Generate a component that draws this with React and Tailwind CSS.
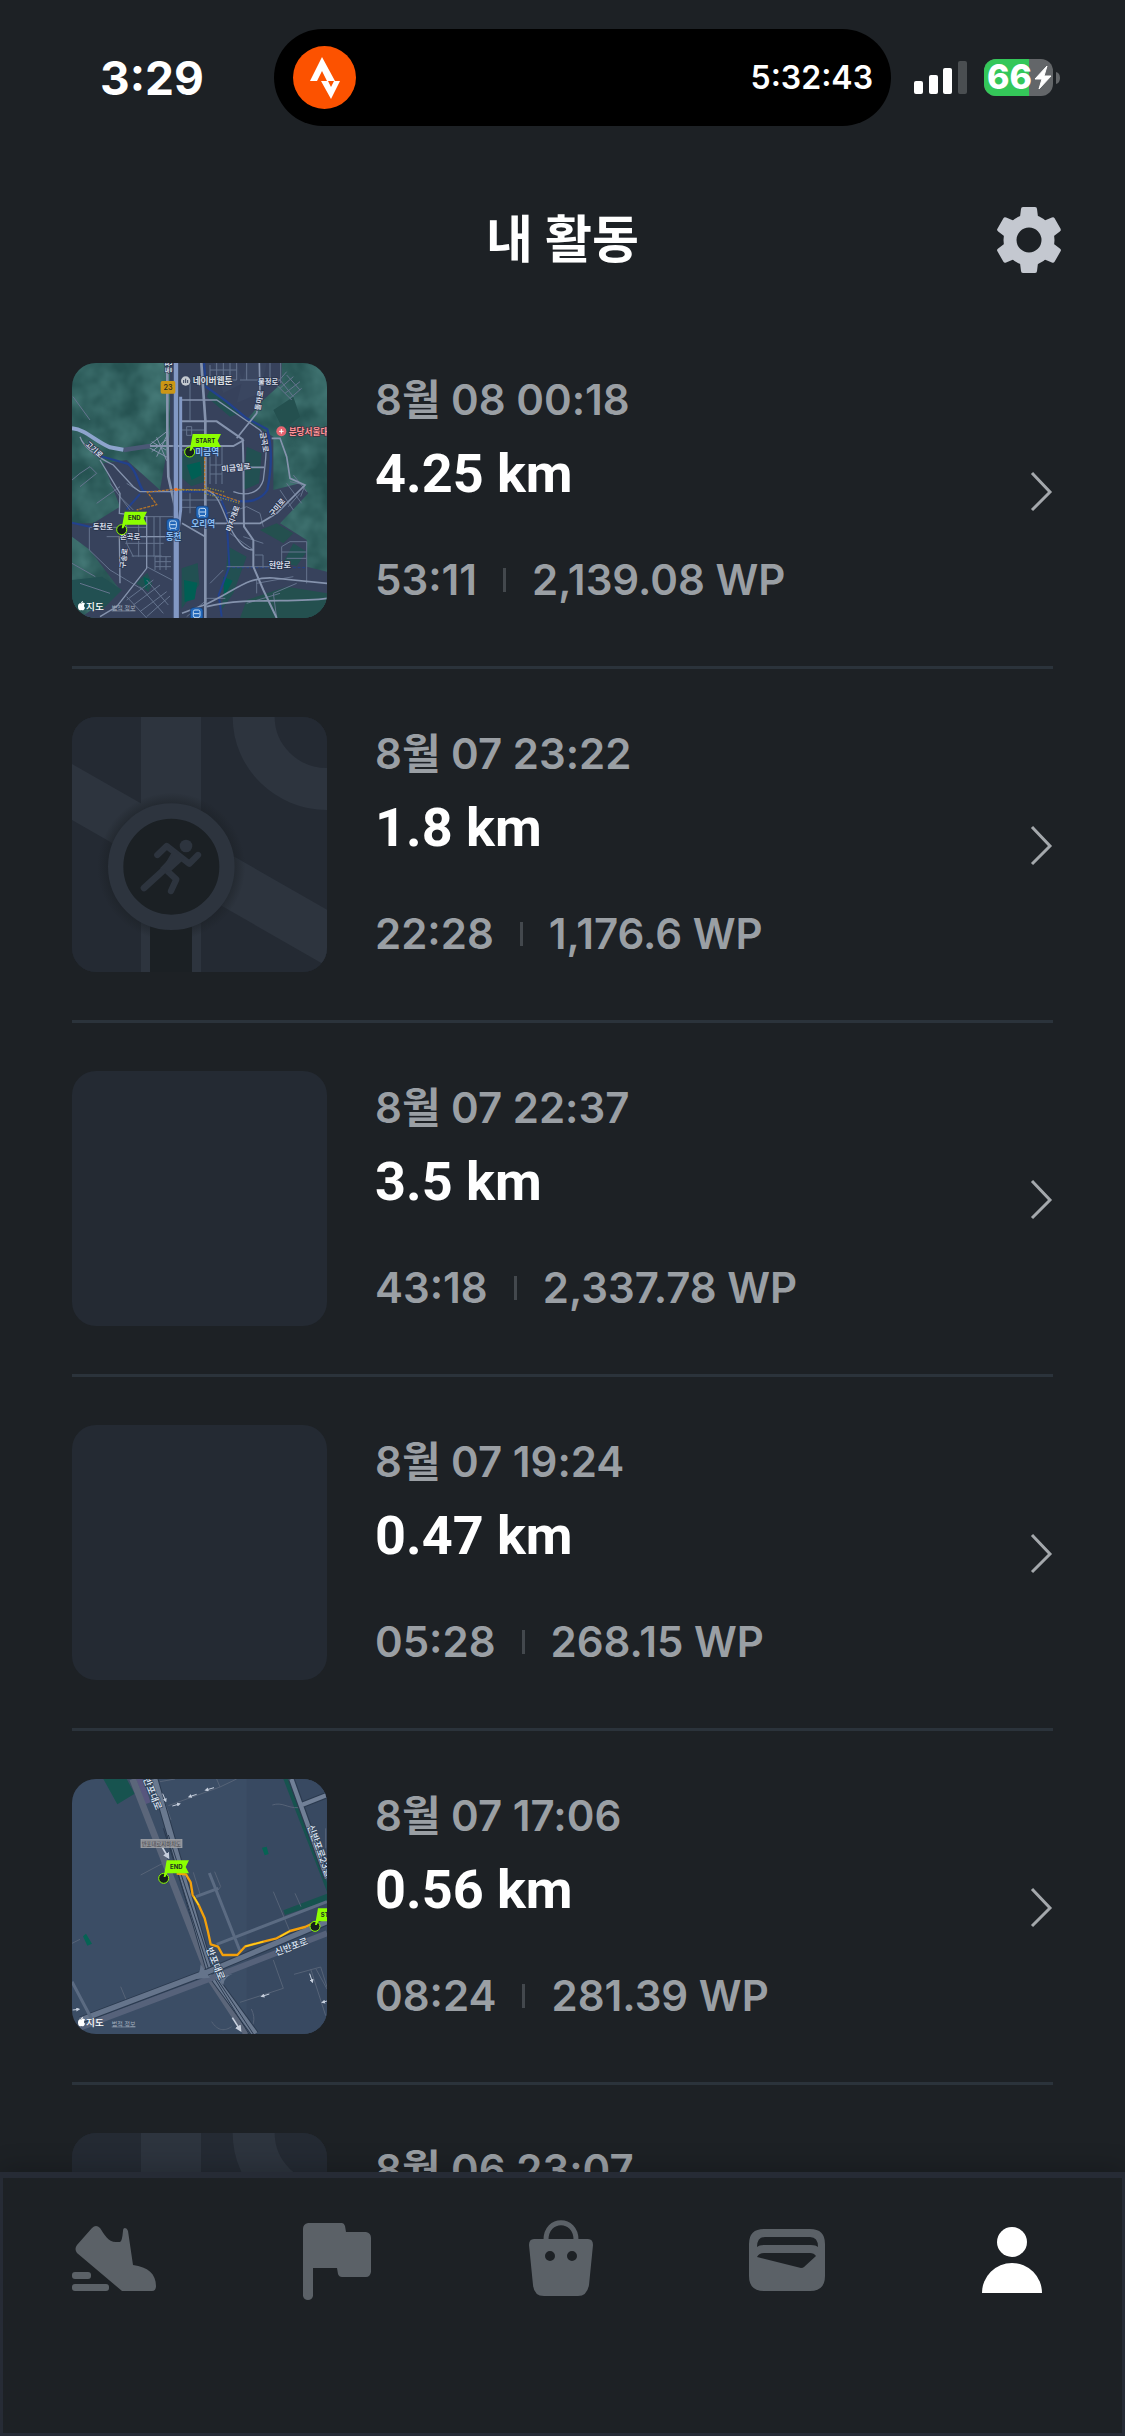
import { useState } from 'react';

const activities = [
  { id: 1, date: '8월 08 00:18', distance: '4.25 km', time: '53:11', points: '2,139.08 WP', thumb: 'city' },
  { id: 2, date: '8월 07 23:22', distance: '1.8 km', time: '22:28', points: '1,176.6 WP', thumb: 'default' },
  { id: 3, date: '8월 07 22:37', distance: '3.5 km', time: '43:18', points: '2,337.78 WP', thumb: 'empty' },
  { id: 4, date: '8월 07 19:24', distance: '0.47 km', time: '05:28', points: '268.15 WP', thumb: 'empty' },
  { id: 5, date: '8월 07 17:06', distance: '0.56 km', time: '08:24', points: '281.39 WP', thumb: 'street' },
  { id: 6, date: '8월 06 23:07', distance: '1.2 km', time: '15:42', points: '704.12 WP', thumb: 'default' },
];

function MapFlag({ x, y, label, width = 74 }) {
  return (
    <g transform={`translate(${x} ${y})`}>
      <circle r="15" fill="#15201c" stroke="#8cff00" strokeWidth="3" />
      <path d={`M0-4 9-54H${width + 20}l-10 20 10 19H11L5-4Z`} fill="#8cff00" />
      <text x={width / 2 + 10} y="-28" textAnchor="middle" fontSize="18" fontWeight="700" fill="#1c3022">{label}</text>
    </g>
  );
}

function AppleMapsMark({ y }) {
  return (
    <g>
      <path d={`M64 ${y - 18}c5-5 9-2 11 0-5 4-3 10 0 12-3 8-6 9-11 7-6 2-9-1-10-9 0-9 4-13 10-10ZM63 ${y - 19}c0-4 3-7 6-7 0 4-3 7-6 7Z`} fill="#fff" />
      <text x="78" y={y} fontSize="29" fontWeight="500" fill="#fff">지도</text>
      <text x="155" y={y} fontSize="18" fill="#a2adbd" textDecoration="underline">법적 정보</text>
    </g>
  );
}

function StationPin({ x, y }) {
  return (
    <g transform={`translate(${x} ${y})`}>
      <rect x="-19" y="-19" width="38" height="38" rx="9" fill="#2166b8" stroke="#173a6d" strokeWidth="2" />
      <rect x="-10" y="-12" width="20" height="22" rx="5" fill="none" stroke="#c5ddf5" strokeWidth="3" />
      <path d="M-8-1H8M-9 14l3-4M9 14l-3-4" stroke="#c5ddf5" strokeWidth="3" />
    </g>
  );
}

function CityMap() {
  return (
    <svg viewBox="36 39 765 765" className="size-full" aria-hidden="true">
      <defs>
        <filter id="terrain" x="0" y="0" width="100%" height="100%">
          <feTurbulence type="fractalNoise" baseFrequency="0.012" numOctaves="3" seed="4" />
          <feColorMatrix values="0 0 0 0 0.08  0 0 0 0 0.24  0 0 0 0 0.23  1.2 0 0 0 -0.3" />
        </filter>
      </defs>
      <rect x="36" y="39" width="765" height="765" fill="#265352" />
      <rect x="36" y="39" width="765" height="765" filter="url(#terrain)" />
      <path d="M365 39H665V100L610 150 560 210 640 260V420L720 400 745 430 660 520 740 570V650L801 665V740L640 804H60L180 720 90 600 36 560V520L100 520 180 470 130 340 200 330 300 420 330 250V39Z" fill="#37425c" />
      <path d="M560 39h60l-20 90-70 30ZM460 39h70l20 60-60 30Z" fill="#3a4660" />
      <path d="M366 320l30-30 35 15 3 90-40 14-28-25ZM365 655l48-16 5 65-53 72ZM228 700l34-32 15 34-12 24ZM505 590l55 30-40 110-35 50ZM700 580l40 25-30 43-40-10ZM510 200l-70-60 10-20 90 70ZM560 290l45 20-8 90-46 20ZM36 690l90-10 60 40-60 60H36Z" fill="#225052" />
      <path d="M560 750l120-40 121 20v74H540ZM600 540l50-20 50 30-30 30ZM640 180l60-40 20 60-50 40Z" fill="#24504f" />
      <path d="M372 690l40 8-8 50-30 8ZM380 345l40-10 5 40-30 15ZM490 680l28 12-26 50ZM250 680l18 8-10 30Z" fill="#005f54" />
      <g fill="none" stroke="#22418d">
        <path d="M432 39 438 110 500 155 560 205 622 238C636 290 634 360 622 420 598 458 555 458 510 450L430 424H250C232 396 230 360 205 342L120 318" strokeWidth="7" />
        <path d="M484 450 500 490 503 560 508 650 476 735 485 800M36 518l60 14M200 478l40-46" strokeWidth="6" />
        <path d="M503 653H740" strokeWidth="3" strokeDasharray="8 6" />
      </g>
      <g fill="none" stroke="#65748e" strokeWidth="3">
        <path d="M39 140 90 210M36 390 60 370 90 350 110 370 60 410M88 532V600L150 660 200 690 250 720M90 532H260M140 560h170M196 580h115M215 618h90M200 500v80l20 40M300 500v120M260 500H340M236 520v100M282 500v120" />
        <path d="M450 290v112M468 290v112M486 290v112M450 345h36M450 372h36M366 240h70M366 300h70M380 230h15v26h-15ZM390 100v110M366 450h120M366 472h60M390 430v60" />
        <path d="M450 45V90H530V39M470 39V90M490 39V90M510 39V90M450 60h80M540 90h60M560 39V90M630 39V90M662 39V100M600 90h62" />
        <path d="M285 620h48M285 635h48M285 650h48M285 620v40M300 620v40M318 620v40M260 650l76 40M200 750l80-60M220 765l80-60M240 785l80-60M260 800l70-62M200 740l60 64M240 710l70 80M260 690l65 75" />
        <path d="M500 650H665V590L690 575H740V700M665 606h75M680 625h60M585 615h24v38M590 690v40M590 700 700 680M650 804 640 730 710 700M560 760l100-30M450 700l40-40M436 745h60M380 800l60-50" />
        <path d="M650 100 680 65M660 115 700 80M675 130 720 95M690 145 725 115M660 90 700 140M680 75l40 45M640 95l55 55" />
        <path d="M690 395 735 405 722 440M680 400l45 60M700 375l40 50M685 470l35-40M700 480l-40-60M500 490 560 470 600 490 610 530M510 550l70 50M550 560l60 20" />
        <path d="M110 460l70-50M200 400l40 25M180 440l40 40M150 400l60 80M60 700l90 30M36 640l70 40" />
      </g>
      <g fill="none" stroke="#8593ad">
        <path d="M270 288H520L552 270" strokeWidth="6" />
        <path d="M322 60V250L325 380 345 470V804" strokeWidth="8" />
        <path d="M424 39 436 210V804" strokeWidth="8" />
        <path d="M366 214H470L548 268C552 350 550 450 552 530L580 570V650L610 720 650 804" strokeWidth="6" />
        <path d="M366 150H470L600 240C630 270 615 340 610 390 598 430 560 440 520 425" strokeWidth="4" />
        <path d="M598 39 600 130 590 190 530 265M635 265H660L680 320 690 385 735 405 650 490 600 520H440M552 352H612" strokeWidth="5" />
        <path d="M436 420C480 425 490 500 520 550 545 590 560 600 580 600" strokeWidth="4" />
        <path d="M60 260C70 290 110 320 160 345L220 410 240 425H345M120 330 180 430 178 490 260 500V655L170 770 120 800M178 560H350M178 560 180 700" strokeWidth="4" />
        <path d="M366 790 440 762C530 720 560 680 640 684L801 700M440 770C560 740 700 760 801 745M366 520 436 560" strokeWidth="5" />
        <path d="M262 290 320 245M262 290 322 322M275 275 318 300M275 305 318 270M290 262l30 70M290 320l30-62" strokeWidth="3" />
      </g>
      <path d="M190 300 270 288" stroke="#4b5876" strokeWidth="14" />
      <path d="M36 235C80 240 100 270 150 292L190 299" fill="none" stroke="#8ea4cd" strokeWidth="12" />
      <path d="M348 39V804" stroke="#8298c4" strokeWidth="13" />
      <path d="M362 140V480L352 560V804" fill="none" stroke="#8298c4" strokeWidth="9" />
      <path d="M340 39V804" stroke="#4a5b82" strokeWidth="2" />
      <path d="M434 320V418L540 455M434 420 345 418 262 426 290 464 230 480" fill="none" stroke="#b27328" strokeWidth="4" strokeDasharray="9 3" />
      <path d="M434 430 540 460M434 412l60 14M345 420H434" stroke="#918b36" strokeWidth="4" strokeDasharray="4 4" />
      <circle cx="348" cy="418" r="5" fill="#f2752d" />
      <rect x="302" y="93" width="44" height="38" rx="5" fill="#cb9615" />
      <text x="324" y="120" fontSize="22" fontWeight="500" textAnchor="middle" fill="#2d2a20">23</text>
      <g fill="#d5dbe8" stroke="#263148" strokeWidth="4" paintOrder="stroke" fontSize="22" fontWeight="700">
        <text x="398" y="103" fontSize="26" fill="#dfe1e6">네이버웹툰</text>
        <text x="594" y="102">불정로</text>
        <text x="485" y="366" transform="rotate(-6 485 366)" fontSize="24">미금일로</text>
        <text x="75" y="284" transform="rotate(42 75 284)">고기로</text>
        <text x="98" y="538">동천로</text>
        <text x="180" y="566">손곡로</text>
        <text x="195" y="656" transform="rotate(-82 195 656)">구송로</text>
        <text x="626" y="654" fontSize="24">현암로</text>
        <text x="638" y="500" transform="rotate(-50 638 500)">구미로</text>
        <text x="512" y="546" transform="rotate(-70 512 546)">마지개로</text>
        <text x="600" y="248" transform="rotate(80 600 248)">금곡로</text>
        <text x="600" y="182" transform="rotate(-80 600 182)">돌마로</text>
        <text x="333" y="70" transform="rotate(-90 333 70)">동천</text>
      </g>
      <circle cx="377" cy="93" r="14" fill="#c4c9d0" />
      <path d="M371 99V90M377 99V86M383 99V90" stroke="#37425c" strokeWidth="3" />
      <circle cx="664" cy="244" r="15" fill="#e56470" />
      <path d="M657 244h14M664 237v14" stroke="#fff" strokeWidth="3" />
      <text x="686" y="254" fontSize="26" fontWeight="700" fill="#ff9496" stroke="#462f3d" strokeWidth="4" paintOrder="stroke">분당서울대</text>
      <StationPin x={427} y={487} />
      <StationPin x={339} y={525} />
      <StationPin x={410} y={792} />
      <g fill="#8dbdf0" stroke="#1d3c68" strokeWidth="4" paintOrder="stroke" fontSize="26" fontWeight="700">
        <text x="406" y="315">미금역</text>
        <text x="394" y="532">오리역</text>
        <text x="317" y="570">동천</text>
      </g>
      <MapFlag x={389} y={306} label="START" />
      <MapFlag x={185} y={539} label="END" width={56} />
      <AppleMapsMark y={779} />
    </svg>
  );
}

function StreetMap() {
  return (
    <svg viewBox="36 42 765 765" className="size-full" aria-hidden="true">
      <defs>
        <marker id="oneway" viewBox="0 0 10 10" refX="6" refY="5" markerWidth="4" markerHeight="4" orient="auto">
          <path d="M0 0 10 5 0 10Z" fill="#c6cfdd" />
        </marker>
      </defs>
      <rect x="36" y="42" width="765" height="765" fill="#3b4d65" />
      <path d="M560 42H801V807H560Z" fill="#384961" />
      <path d="M130 42h70l24 44-52 32ZM670 436l131-50v22L675 450ZM670 42h14l117 310v28Z" fill="#17534f" />
      <path d="M78 506l18 30-14 6-13-28ZM606 248l14-3 6 22-12 4Z" fill="#066354" />
      <path d="M228 42h20l24 70-16 6Z" fill="#57567e" />
      <g fill="none" stroke="#566377" strokeWidth="3">
        <path d="M290 42 333 165M300 50 345 42M325 122 480 66 530 42M470 42l10 24M242 330 310 294M400 322l20 65M464 320l18 45-8 10M640 380l50 120M705 385l18 40M182 665l20 48M36 535l24-12M637 120c30-10 45 10 78 8M540 712 670 670 640 585M702 628l80-22 19 60M752 612l45 140M768 612l33 60M455 770c20 30 40 28 60 15M574 732c15 30 8 60-20 65M797 250v-60" />
      </g>
      <g fill="none">
        <path d="M218 42 450 640 560 807" stroke="#5b667a" strokeWidth="20" />
        <path d="M283 42 452 625 585 807" stroke="#2a394e" strokeWidth="24" />
        <path d="M283 42 452 625 585 807" stroke="#6a798f" strokeWidth="18" />
        <path d="M310 190 445 610 567 807M325 210 460 625 580 807" stroke="#2a394e" strokeWidth="3" />
        <path d="M60 788 440 645 801 505" stroke="#56627a" strokeWidth="18" />
        <path d="M60 766 440 622 801 470" stroke="#2b3a4f" strokeWidth="22" />
        <path d="M60 766 440 622 801 470" stroke="#65748b" strokeWidth="16" />
        <path d="M36 650 95 762M470 538 801 410M448 324 540 558M408 395 475 370" stroke="#5b6b82" strokeWidth="9" />
        <path d="M694 42 801 340M725 120 801 90" stroke="#2b3a4f" strokeWidth="20" />
        <path d="M694 42 801 340M725 120 801 90" stroke="#718097" strokeWidth="13" />
      </g>
      <path d="M400 643q20-10 22-45l28 40ZM490 660q2-25 28-33l-50 10Z" fill="#65748b" />
      <g stroke="#c6cfdd" strokeWidth="3" fill="none">
        <path d="M308 86 317 108" markerEnd="url(#oneway)" />
        <path d="M410 88 388 95" markerEnd="url(#oneway)" />
        <path d="M462 68 438 75" markerEnd="url(#oneway)" />
        <path d="M337 123 358 117" markerEnd="url(#oneway)" />
        <path d="M628 687 606 694" markerEnd="url(#oneway)" />
        <path d="M749 626 757 650" markerEnd="url(#oneway)" />
        <path d="M38 735 56 733" markerEnd="url(#oneway)" />
        <path d="M801 708 788 712" markerEnd="url(#oneway)" />
        <path d="M304 242 324 276" strokeWidth="5" markerEnd="url(#oneway)" />
        <path d="M517 758 540 794" strokeWidth="5" markerEnd="url(#oneway)" />
      </g>
      <g fill="#dce5f3" stroke="#314158" strokeWidth="4" paintOrder="stroke" fontSize="28" fontWeight="500">
        <text x="249" y="42" transform="rotate(68 249 42)">반포대로</text>
        <text x="438" y="552" transform="rotate(68 438 552)">반포대로</text>
        <text x="649" y="572" transform="rotate(-20 649 572)">신반포로</text>
        <text x="742" y="184" transform="rotate(70 742 184)">신반포로23길</text>
      </g>
      <rect x="243" y="223" width="123" height="25" fill="#8e9096" stroke="#a6a8ad" strokeWidth="2" />
      <text x="304" y="242" textAnchor="middle" fontSize="16" fill="#3f4247">반포대로지하차도</text>
      <path d="M350 326 378 328 392 352 398 390 416 420 434 460 444 500 452 538 474 545 488 570 532 570 556 544 610 530 650 520 690 498 735 486 765 472" fill="none" stroke="#f3a00b" strokeWidth="7" strokeLinejoin="round" />
      <path d="M402 395l14 25M556 544l54-14M660 515l30-17" stroke="#ffd21e" strokeWidth="4" />
      <MapFlag x={311} y={340} label="END" width={56} />
      <MapFlag x={765} y={484} label="START" />
      <AppleMapsMark y={782} />
    </svg>
  );
}

function DefaultThumb() {
  return (
    <svg viewBox="36 51 765 765" className="size-full" aria-hidden="true">
      <defs>
        <radialGradient id="halo">
          <stop offset="0.8" stopColor="#1b2025" stopOpacity="0.7" />
          <stop offset="1" stopColor="#1b2025" stopOpacity="0" />
        </radialGradient>
      </defs>
      <rect x="36" y="51" width="765" height="765" fill="#242a33" />
      <path d="M243 51H423V330H243ZM36 192 801 629V799L36 360ZM243 640H423V816H243Z" fill="#2d343e" />
      <path d="M581 51C581 170 680 267 801 267" fill="none" stroke="#2d343e" strokeWidth="126" />
      <circle cx="334" cy="500" r="222" fill="url(#halo)" />
      <rect x="270" y="660" width="126" height="156" fill="#1b2024" />
      <circle cx="334" cy="500" r="167" fill="#1b2024" stroke="#2d343e" strokeWidth="46" />
      <circle cx="378" cy="438" r="19" fill="#2d343e" />
      <g fill="none" stroke="#2d343e" strokeLinejoin="round" strokeLinecap="round">
        <path d="M292 465 320 438 388 491 414 465M322 513 349 538 333 573" strokeWidth="19" />
        <path d="M252 564 322 500 344 462" strokeWidth="20" />
      </g>
      <path d="M318 430 372 478 330 516 300 505 338 465Z" fill="#2d343e" />
    </svg>
  );
}

function Thumbnail({ type }) {
  return (
    <div className="size-[255px] shrink-0 overflow-hidden rounded-3xl bg-[#242a33]">
      {type === 'city' && <CityMap />}
      {type === 'street' && <StreetMap />}
      {type === 'default' && <DefaultThumb />}
    </div>
  );
}

function ActivityRow({ activity }) {
  return (
    <li className="border-b-3 border-[#2b333b] py-12 first:pt-0">
      <a href={`#activity-${activity.id}`} className="flex items-center gap-12">
        <Thumbnail type={activity.thumb} />
        <div className="flex h-[255px] min-w-0 flex-1 flex-col pt-2">
          <p className="text-[42px] leading-[58px] font-semibold text-[#9a9fa4]">{activity.date}</p>
          <p className="mt-[13px] font-[Roboto] text-[54px] leading-[64px] font-bold text-white">{activity.distance}</p>
          <div className="mt-[45px] flex items-center gap-[26px] text-[42px] leading-[58px] font-semibold text-[#9a9fa4]">
            <span>{activity.time}</span>
            <span className="h-6 w-[3px] bg-[#43484d]" />
            <span>{activity.points}</span>
          </div>
        </div>
        <svg viewBox="0 0 24 42" className="h-[42px] w-6 shrink-0" fill="none" stroke="#a4a8ac" strokeWidth="3" aria-hidden="true">
          <path d="M3 3 21 22 3 40" />
        </svg>
      </a>
    </li>
  );
}

function StatusBar() {
  return (
    <div className="flex items-center pt-[29px] pr-16">
      <span className="w-[274px] pl-[100px] text-[46px] leading-[56px] font-bold">3:29</span>
      <div className="flex h-[97px] flex-1 items-center justify-between rounded-full bg-black pr-[18px] pl-[19px]">
        <svg viewBox="0 0 63 63" className="size-[63px]" aria-hidden="true">
          <circle cx="31.5" cy="31.5" r="31.5" fill="#fc5200" />
          <path d="M17 35 29 11 42 35H34L29 25 24 35ZM28 35H35L38 41 41 35H47L38 53Z" fill="#fff" />
        </svg>
        <span className="text-[32px] leading-[40px] font-semibold">5:32:43</span>
      </div>
      <svg viewBox="0 0 54 34" className="ml-[23px] h-[34px] w-[54px]" fill="#fff" aria-hidden="true">
        <rect y="20" width="9" height="13" rx="2" />
        <rect x="15" y="14" width="9" height="19" rx="2" />
        <rect x="29" y="7" width="9" height="26" rx="2" />
        <rect x="44" width="9" height="33" rx="2" fill="#4a4e51" />
      </svg>
      <svg viewBox="0 0 77 37" className="ml-4 h-[37px] w-[77px] overflow-visible" aria-hidden="true">
        <clipPath id="battery">
          <rect width="69" height="37" rx="12" />
        </clipPath>
        <g clipPath="url(#battery)">
          <rect width="69" height="37" fill="#636669" />
          <rect width="45" height="37" fill="#34c759" />
        </g>
        <path d="M72 13q4 1 4 6t-4 6Z" fill="#636669" />
        <text x="3" y="30" fontSize="34" fontWeight="800" fill="#fff">66</text>
        <path d="M63 7 51 20H58L55 30 67 17H60Z" fill="#fff" stroke="#fff" strokeLinejoin="round" />
      </svg>
    </div>
  );
}

function GearIcon() {
  return (
    <svg viewBox="0 0 66 66" className="size-[66px]" aria-hidden="true">
      <g fill="#c4c8d0">
        <path d="M27 0h12q2 0 2 2l2 16H23l2-16q0-2 2-2Z" />
        <path d="M27 0h12q2 0 2 2l2 16H23l2-16q0-2 2-2Z" transform="rotate(60 33 33)" />
        <path d="M27 0h12q2 0 2 2l2 16H23l2-16q0-2 2-2Z" transform="rotate(120 33 33)" />
        <path d="M27 0h12q2 0 2 2l2 16H23l2-16q0-2 2-2Z" transform="rotate(180 33 33)" />
        <path d="M27 0h12q2 0 2 2l2 16H23l2-16q0-2 2-2Z" transform="rotate(240 33 33)" />
        <path d="M27 0h12q2 0 2 2l2 16H23l2-16q0-2 2-2Z" transform="rotate(300 33 33)" />
      </g>
      <circle cx="33" cy="33" r="19" fill="none" stroke="#c4c8d0" strokeWidth="13" />
    </svg>
  );
}

const tabs = [
  {
    id: 'run',
    label: '러닝',
    icon: (
      <>
        <path d="M22 14Q26 10 30 14C34 20 38 28 46 28H50Q52 28 53 17Q53 14 55 14T58 17L63 51C78 53 86 60 86 72Q86 77 82 77H52L7 39Q4 35 7 31Z" />
        <rect x="2" y="58" width="19" height="7" rx="3" />
        <rect x="2" y="70" width="37" height="7" rx="3" />
      </>
    ),
  },
  {
    id: 'challenge',
    label: '챌린지',
    icon: <path d="M14 9H48Q50 9 51 12L52 18H72Q77 19 77 24V58Q76 63 72 63H48Q45 63 44 60L43 54H19V82Q18 86 14 86T9 82V15Q9 10 14 9Z" />,
  },
  {
    id: 'shop',
    label: '상점',
    icon: (
      <>
        <path d="M29 26C29 3 59 3 59 26" fill="none" stroke="currentColor" strokeWidth="5" />
        <path fillRule="evenodd" d="M17 25H71Q76 25 76 31L72 71Q70 82 61 82H27Q17 82 16 71L12 31Q12 25 17 25ZM33 37a5 5 0 1 0 0 10 5 5 0 0 0 0-10ZM55 37a5 5 0 1 0 0 10 5 5 0 0 0 0-10Z" />
      </>
    ),
  },
  {
    id: 'wallet',
    label: '지갑',
    icon: <path fillRule="evenodd" d="M23 15H69Q84 15 84 30V62Q84 77 69 77H23Q8 77 8 62V30Q8 15 23 15ZM24 23Q16 23 16 33 18 31 23 31H70Q75 31 77 33 77 23 69 23ZM23 39Q18 39 16 43L60 54Q62 54 63 53L75 42Q73 39 69 39Z" />,
  },
  {
    id: 'profile',
    label: '내 정보',
    icon: (
      <>
        <circle cx="47" cy="28" r="15" />
        <path d="M17 79a30 30 0 0 1 60 0Z" />
      </>
    ),
  },
];

function TabBar() {
  const [active, setActive] = useState('profile');

  return (
    <nav className="relative grid h-[264px] shrink-0 grid-cols-5 items-start border-3 border-t-6 border-[#262b35] bg-[#1d2125] pt-9 shadow-[0_-4px_24px_rgba(0,0,0,0.2)]">
      {tabs.map(tab => (
        <button
          key={tab.id}
          type="button"
          aria-label={tab.label}
          onClick={() => setActive(tab.id)}
          className={active === tab.id ? 'flex justify-center text-white' : 'flex justify-center text-[#5b6167]'}
        >
          <svg viewBox="0 0 90 90" className="size-[90px]" fill="currentColor" aria-hidden="true">
            {tab.icon}
          </svg>
        </button>
      ))}
    </nav>
  );
}

export default function App() {
  return (
    <div className="flex h-screen flex-col bg-[#1d2125] font-[Inter,'Noto_Sans_CJK_KR',sans-serif] text-white">
      <StatusBar />
      <header className="mt-[66px] grid grid-cols-[1fr_auto_1fr] items-center px-[63px]">
        <h1 className="col-start-2 text-[51px] leading-[96px] font-bold">내 활동</h1>
        <button type="button" aria-label="설정" className="justify-self-end">
          <GearIcon />
        </button>
      </header>
      <main className="min-h-0 flex-1 overflow-hidden px-[72px] pt-[75px]">
        <ul>
          {activities.map(activity => (
            <ActivityRow key={activity.id} activity={activity} />
          ))}
        </ul>
      </main>
      <TabBar />
    </div>
  );
}
